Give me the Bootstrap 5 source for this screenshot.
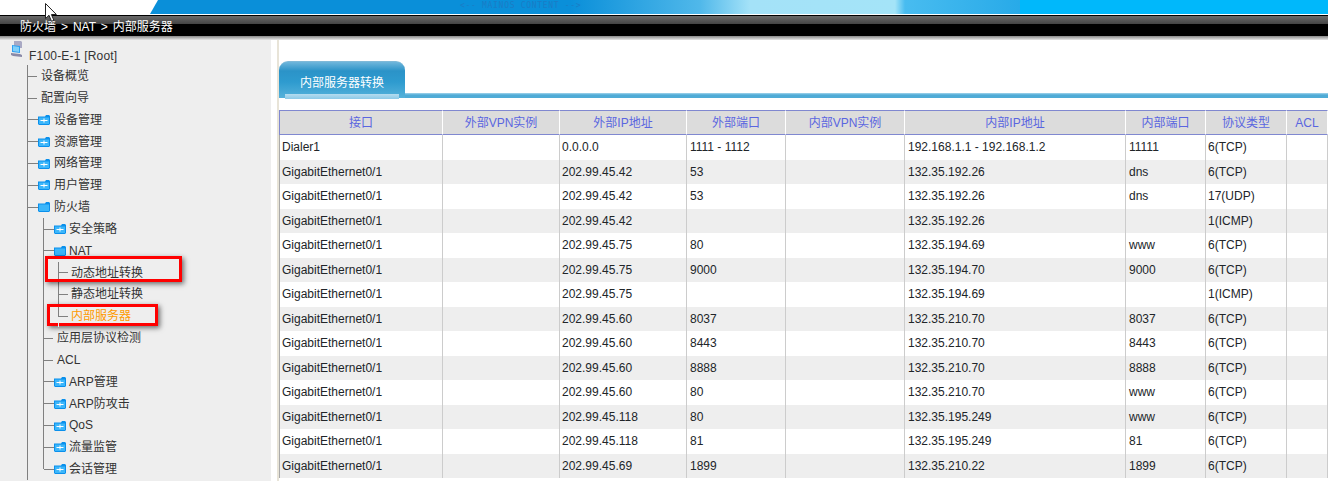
<!DOCTYPE html>
<html lang="zh-CN">
<head>
<meta charset="UTF-8">
<title>内部服务器</title>
<link href="https://cdn.jsdelivr.net/npm/bootstrap@5.3.0/dist/css/bootstrap.min.css" rel="stylesheet">
<style>
html, body { height: 481px; overflow: hidden; }
body { font: 12px/1.2 "Liberation Sans", "Noto Sans CJK SC", sans-serif; color: #000; background: #fff; position: relative; }
.top-banner { height: 15px; background: #fff; }
.banner-fill { height: 14px; margin-left: 150px; padding-top: 1px; clip-path: polygon(8px 0, 100% 0, 100% 100%, 0 100%);
  background: linear-gradient(90deg, #0a8fd9 0, #0a8fd9 420px, #50b8ea 550px, #a4e2f8 600px, #a4e4f8 745px, #48bcf0 755px, #28aae8 870px, #00b8fb 870px, #00b8fb 100%); }
.banner-note { font: 8px/9px "DejaVu Sans Mono", monospace; letter-spacing: .7px; color: #1a7cc6; margin-left: 310px; white-space: nowrap; }
.crumb-bar { height: 25px; border-top: 1px solid #000; background: linear-gradient(#6a6a6a 0, #444 8px, #000 8px, #000 20px, #888 20px, #fff 25px); color: #fff; padding: 4px 0 0 20px; font-size: 12px; word-spacing: 1.6px; line-height: 15px; }
.main-area { height: 441px; }
.side-tree { width: 271px; background: #eee; color: #333; flex: none; padding: 6px 0 0 9px; height: 441px; overflow: hidden; }
.side-gap { width: 8px; flex: none; background: linear-gradient(90deg, #fff 0, #fff 6px, #e8e4d8 6px); }
.tree-root { height: 20px; margin-bottom: -.6px; display: flex; align-items: center; gap: 6px; letter-spacing: .2px; }
.root-ico { align-self: flex-start; margin: -5px 0 0 1px; flex: none; }
.tree-list { list-style: none; margin: 0; padding: 0; }
.tree-top { margin-left: 18px; border-left: 1px solid #808080; }
.tree-sub { margin: 0 0 0 15px; }
.tree-leaf { margin: 0 0 0 14px; }
.tree-sub, .tree-leaf { border-left: 1px solid #808080; }
.tree-row { height: 21.83px; display: flex; align-items: center; white-space: nowrap; position: relative; font-size: 12px; }
.tree-row::before { content: ""; width: 9px; height: 1px; background: #808080; margin-right: 4px; flex: none; }
.tree-row.has-folder::before { width: 10px; margin-right: 0; }
.folder-ico { margin-right: 4px; flex: none; }
.tree-sub .folder-ico { margin-right: 3px; }
.tree-leaf .tree-row::before { margin-right: 3px; }
/* last child of a branch: hide the vertical line under its connector */
.tree-sub > li:last-child > .tree-row::after, .tree-leaf > li:last-child > .tree-row::after { content: ""; position: absolute; left: -1px; top: 11px; bottom: 0; width: 1px; background: #eee; }
.tree-current { color: #ff9a00; }
.red-mark { position: absolute; border: 3px solid #f00; box-shadow: 2px 2px 5px rgba(0,0,0,.55); pointer-events: none; }
.mark-one { left: -14px; top: -6px; width: 137px; height: 26px; }
.mark-two { left: -12px; top: -2px; width: 111px; height: 22px; }
.work-pane { min-width: 0; flex: 1; overflow: hidden; background: #fff; }
.tab-strip { height: 49px; margin-top: 9px; display: flex; align-items: flex-end; }
.tab-btn { width: 126px; height: 37px; flex: none; position: relative; color: #fff; text-align: center; line-height: 43px; border-radius: 9px 9px 0 0; border-top: 1px solid #7fb9d8; background: linear-gradient(#6fb6db 0, #2b93c8 9px, #2e9bcf 20px, #55b1da 100%); }
.tab-btn::after { content: ""; position: absolute; left: 6px; right: 6px; top: 32px; height: 5px; background: linear-gradient(#b5dcef, #8ccae8); }
.tab-rule { flex: 1; height: 5px; margin-left: 0; background: linear-gradient(#a5d5ec 0, #4fabd6 2px); }
.nat-table { table-layout: fixed; width: 1049px; margin: 12.4px 0 0; border-collapse: separate; border-spacing: 0; font-size: 12px; }
.nat-table th { height: 25px; padding: 0; background: #dcdcdc; color: #5a66e0; font-weight: 400; text-align: center; vertical-align: middle; border-top: 1px solid #8088d0; border-bottom: 1px solid #8088d0; border-right: 1px solid #fff; }
.nat-table th:first-child { border-left: 1px solid #8088d0; }
.nat-table td { height: 24.5px; padding: 0 0 0 2px; vertical-align: middle; border: 0; border-right: 1px solid #ccc; background: #fff; white-space: nowrap; overflow: hidden; box-shadow: none; }
.nat-table td:nth-child(4), .nat-table td:nth-child(6), .nat-table td:nth-child(7) { padding-left: 3px; }
.nat-table td:first-child { border-left: 1px solid #aaa; }
.nat-table tr.row-alt td { background: #eee; }
.mouse-arrow { position: absolute; left: 45px; top: 3px; }
</style>
</head>
<body>
<div class="top-banner"><div class="banner-fill"><div class="banner-note">&lt;-- MAINOS CONTENT --&gt;</div></div></div>
<div class="crumb-bar">防火墙 &gt; NAT &gt; 内部服务器</div>
<div class="main-area d-flex">
  <div class="side-tree" id="tree"></div>
  <div class="side-gap"></div>
  <div class="work-pane">
    <div class="tab-strip">
      <div class="tab-btn">内部服务器转换</div>
      <div class="tab-rule"></div>
    </div>
    <table class="table nat-table">
      <colgroup><col style="width:164px"><col style="width:117px"><col style="width:127px"><col style="width:99px"><col style="width:119px"><col style="width:221px"><col style="width:80px"><col style="width:81px"><col style="width:41px"></colgroup>
      <thead><tr><th>接口</th><th>外部VPN实例</th><th>外部IP地址</th><th>外部端口</th><th>内部VPN实例</th><th>内部IP地址</th><th>内部端口</th><th>协议类型</th><th>ACL</th></tr></thead>
      <tbody id="rows"></tbody>
    </table>
  </div>
</div>
<svg class="mouse-arrow" width="13" height="20" viewBox="0 0 13 20"><path d="M.5.5v15l3.5-3.2 2.5 6 2.4-1-2.5-5.8h5z" fill="#fff" stroke="#222"/></svg>
<script>
const folderIco = (open) => `<svg class="folder-ico" width="12" height="10" viewBox="0 0 12 10"><path d="M0 1.5h7l1-1.5h3l1 1v8l-1 1H1l-1-1z" fill="#0a90ec"/><path d="M1 2.5h10v6.5H1z" fill="#3cb6fa"/>${open ? '' : '<path d="M2.5 5h7v1h-7zM5.5 3.5h1v4h-1z" fill="#fff"/>'}</svg>`;
const row = (text, folder, extra = '', cls = '', kids = '') => `<li><div class="tree-row ${folder ? 'has-folder' : ''} ${cls}">${folder ? folderIco(folder === 'open') : ''}<span>${text}</span>${extra}</div>${kids}</li>`;
const leafKids = `<ul class="tree-list tree-leaf">${row('动态地址转换', false, '<div class="red-mark mark-one"></div>')}${row('静态地址转换')}${row('内部服务器', false, '<div class="red-mark mark-two"></div>', 'tree-current')}</ul>`;
const subKids = `<ul class="tree-list tree-sub">${row('安全策略', 'closed')}${row('NAT', 'open', '', '', leafKids)}${row('应用层协议检测')}${row('ACL')}${row('ARP管理', 'closed')}${row('ARP防攻击', 'closed')}${row('QoS', 'closed')}${row('流量监管', 'closed')}${row('会话管理', 'closed')}</ul>`;
document.getElementById('tree').innerHTML = `
<div class="tree-root"><svg class="root-ico" width="13" height="17" viewBox="0 0 13 17"><path d="M4 0h7l1 1v6H4z" fill="#a9a9c4"/><path d="M2 4l8 1v7l-8-1z" fill="#2f9ff0"/><path d="M3 5l6 1v5l-6-1z" fill="#7fd0fa"/><path d="M1 12l9 1 2 1v2l-9-1-2-1z" fill="#8a8aa8"/></svg><span>F100-E-1 [Root]</span></div>
<ul class="tree-list tree-top">
${row('设备概览')}${row('配置向导')}${row('设备管理', 'closed')}${row('资源管理', 'closed')}${row('网络管理', 'closed')}${row('用户管理', 'closed')}${row('防火墙', 'open', '', '', subKids)}
</ul>`;

const data = [
 ['Dialer1','0.0.0.0','1111 - 1112','192.168.1.1 - 192.168.1.2','11111','6(TCP)'],
 ['GigabitEthernet0/1','202.99.45.42','53','132.35.192.26','dns','6(TCP)'],
 ['GigabitEthernet0/1','202.99.45.42','53','132.35.192.26','dns','17(UDP)'],
 ['GigabitEthernet0/1','202.99.45.42','','132.35.192.26','','1(ICMP)'],
 ['GigabitEthernet0/1','202.99.45.75','80','132.35.194.69','www','6(TCP)'],
 ['GigabitEthernet0/1','202.99.45.75','9000','132.35.194.70','9000','6(TCP)'],
 ['GigabitEthernet0/1','202.99.45.75','','132.35.194.69','','1(ICMP)'],
 ['GigabitEthernet0/1','202.99.45.60','8037','132.35.210.70','8037','6(TCP)'],
 ['GigabitEthernet0/1','202.99.45.60','8443','132.35.210.70','8443','6(TCP)'],
 ['GigabitEthernet0/1','202.99.45.60','8888','132.35.210.70','8888','6(TCP)'],
 ['GigabitEthernet0/1','202.99.45.60','80','132.35.210.70','www','6(TCP)'],
 ['GigabitEthernet0/1','202.99.45.118','80','132.35.195.249','www','6(TCP)'],
 ['GigabitEthernet0/1','202.99.45.118','81','132.35.195.249','81','6(TCP)'],
 ['GigabitEthernet0/1','202.99.45.69','1899','132.35.210.22','1899','6(TCP)']
];
document.getElementById('rows').innerHTML = data.map((d, i) => `<tr class="${i % 2 ? 'row-alt' : ''}"><td>${d[0]}</td><td></td><td>${d[1]}</td><td>${d[2]}</td><td></td><td>${d[3]}</td><td>${d[4]}</td><td>${d[5]}</td><td></td></tr>`).join('');
</script>
<script src="https://cdn.jsdelivr.net/npm/bootstrap@5.3.0/dist/js/bootstrap.bundle.min.js"></script>
</body>
</html>
